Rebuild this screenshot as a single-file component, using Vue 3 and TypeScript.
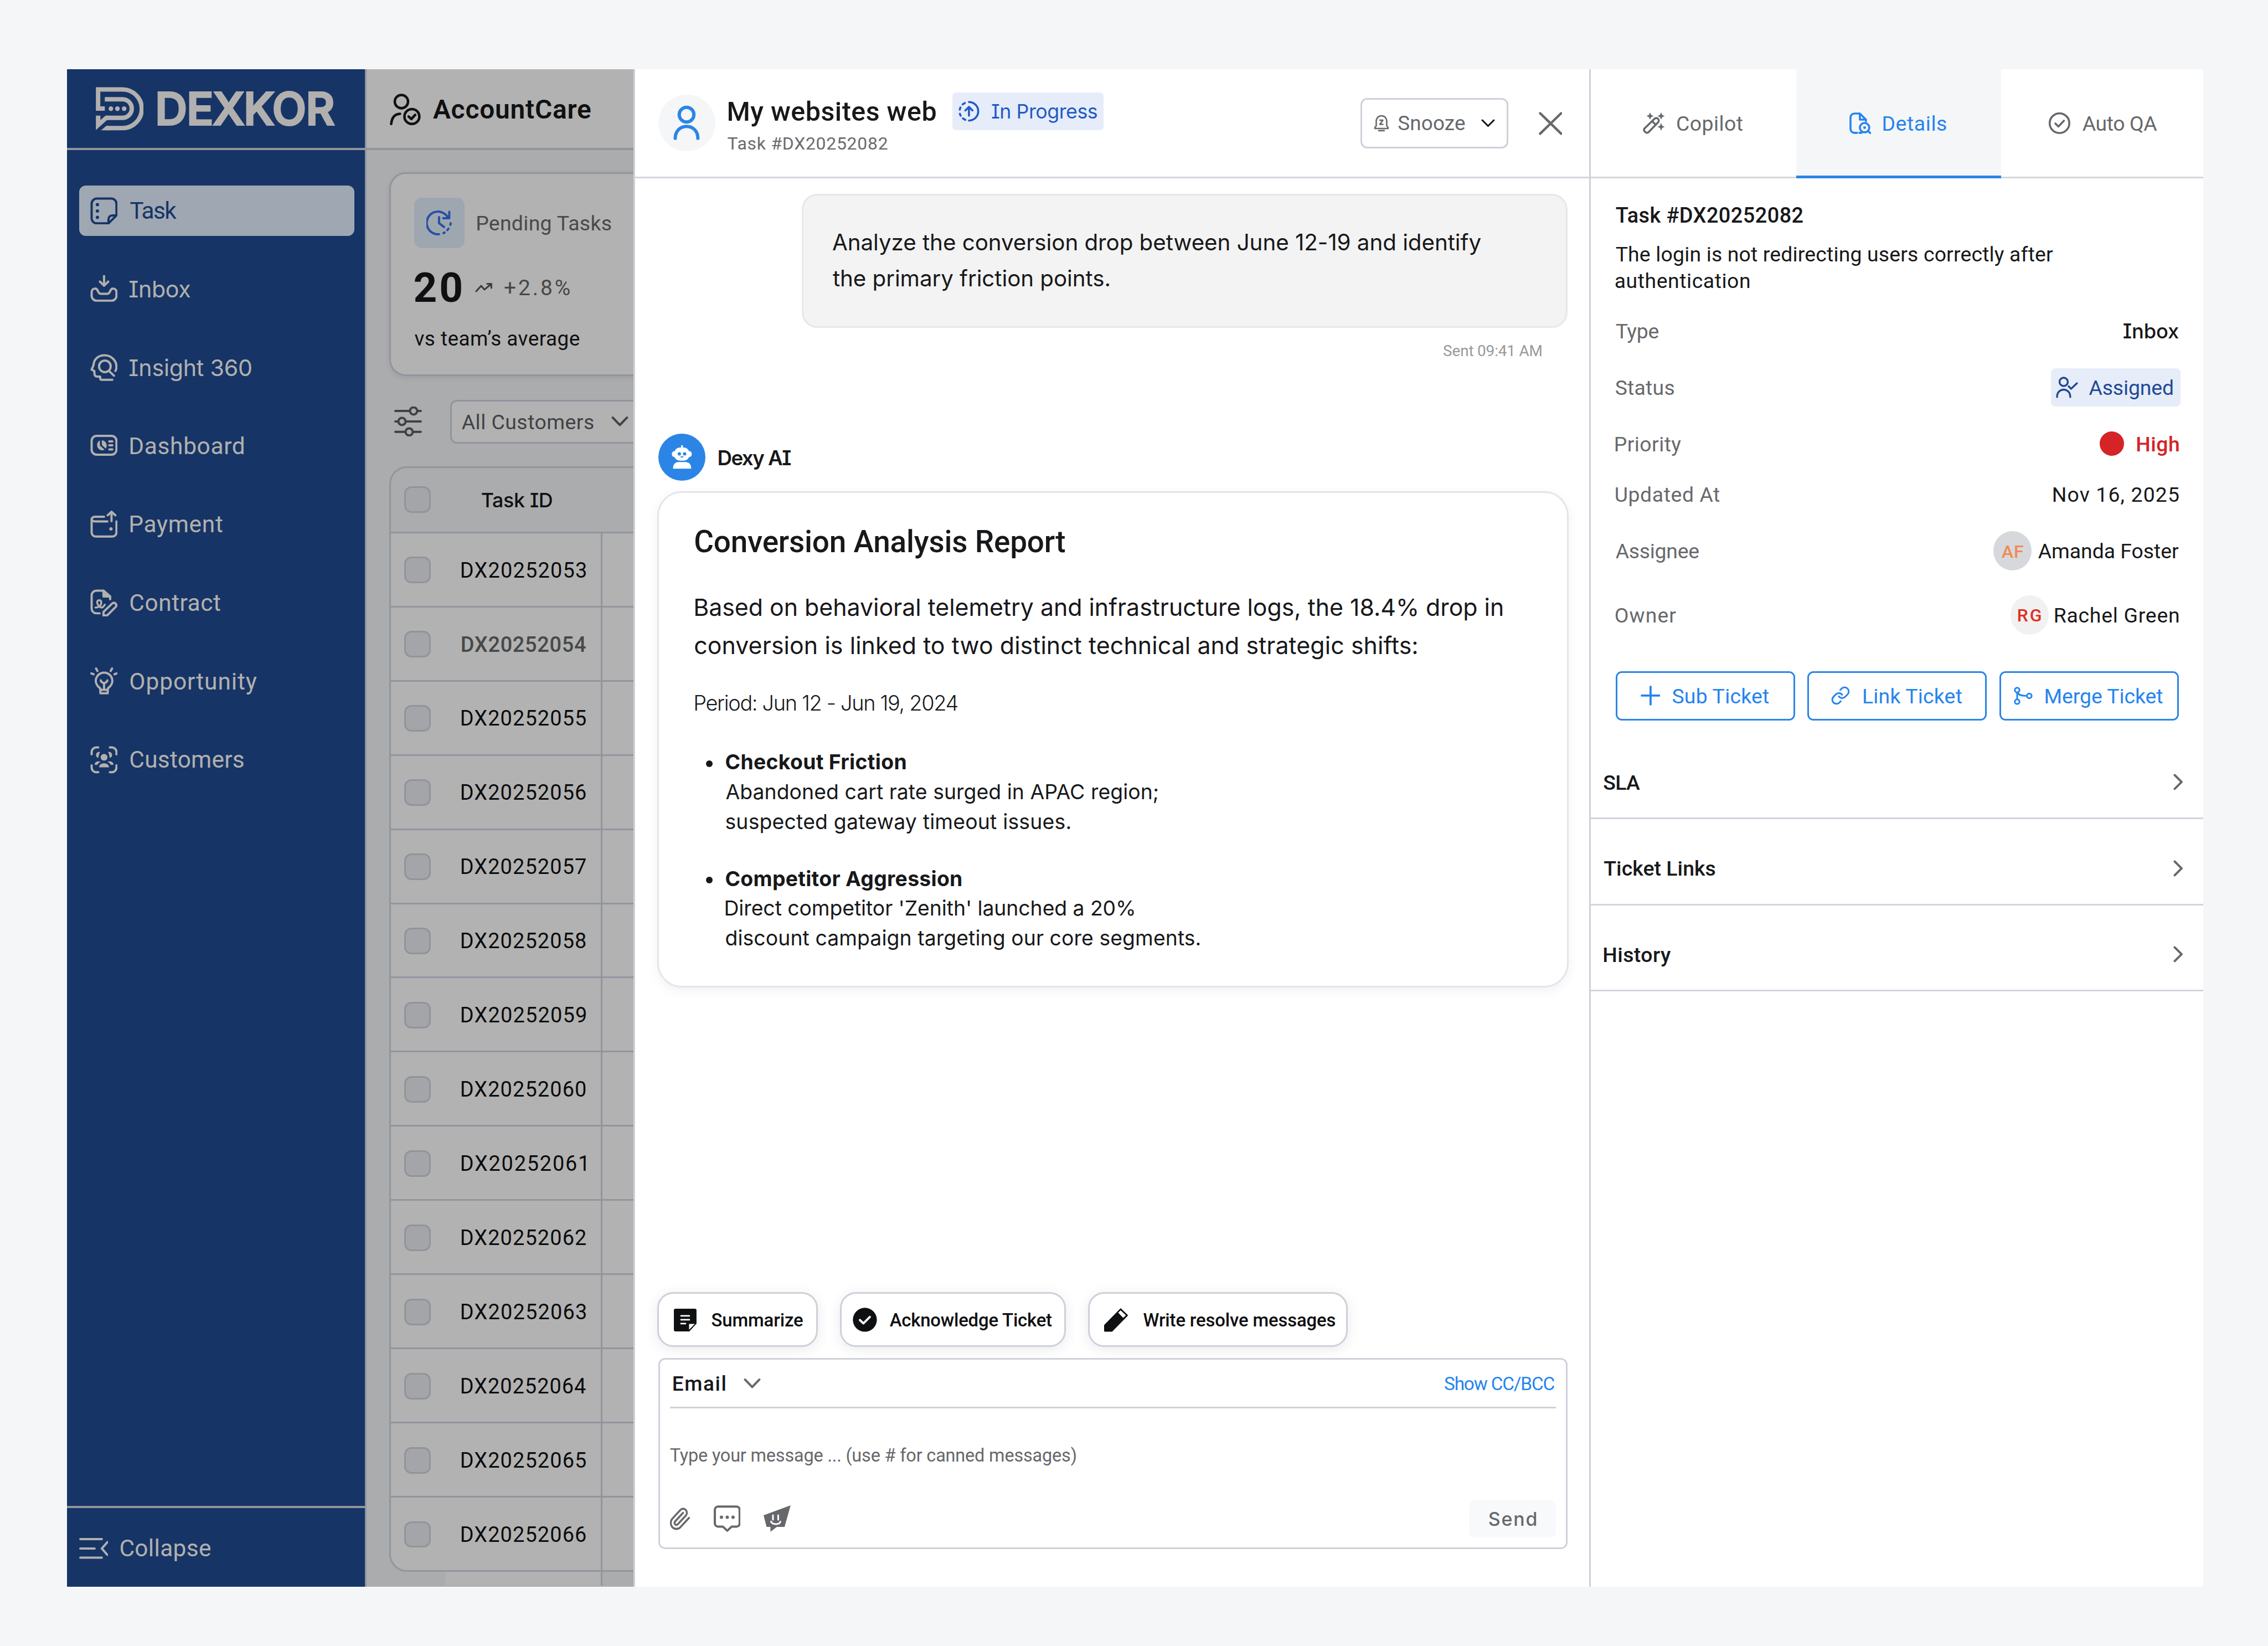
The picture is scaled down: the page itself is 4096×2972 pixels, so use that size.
<script setup lang="ts">
import { h, type Directive } from 'vue'

/* Icon set: [width, height, svg markup] */
const icons: Record<string, [number, number, string]> = {
  logo: [87, 79, '<g transform="translate(-13 -18) scale(.3333)" stroke-width="24" stroke-linecap="butt" stroke-linejoin="miter"><path d="M88 171.500H51.500V67.500H184A105 105 0 0 1 184 277.500H96"/><path d="M88 121H184A50.500 50.500 0 0 1 184 222H98"/><g fill="currentColor" stroke="none"><path d="M68 289.500L96 265.500H112V289.500Z"/><path d="M39.500 210H64V234L92 210H110V234H100L39.500 288Z"/><circle cx="121" cy="172" r="12.500"/><circle cx="156.500" cy="172" r="12.500"/><circle cx="193" cy="172" r="12.500"/></g></g>'],
  task: [50, 50, '<path d="M12 2.500H38A9.500 9.500 0 0 1 47.500 12V33L33 47.500H12A9.500 9.500 0 0 1 2.500 38V12A9.500 9.500 0 0 1 12 2.500ZM47 33H40A7 7 0 0 0 33 40V47"/><g fill="currentColor" stroke="none"><circle cx="13" cy="13.500" r="3"/><circle cx="13" cy="25" r="3"/><circle cx="13" cy="36.500" r="3"/></g>'],
  inbox: [50, 50, '<path d="M25 0V18M17.500 11.500L25 19L32.500 11.500M9 24C15 24 13 33.500 19 33.500H31C37 33.500 35 24 41 24C45 24 47.500 27 47.500 31V37A9 9 0 0 1 38.500 46H11.500A9 9 0 0 1 2.500 37V31C2.500 27 5 24 9 24Z"/>'],
  insight: [50, 50, '<path d="M45.500 31C47 28.500 47.500 26 47.500 23A21.500 21 0 0 0 26 2.500C14 2.500 6.500 10 6 20L2.500 28.500L7.500 31V35C7.500 39 9 41 13 41H18V44.500Q18 47 21 47H40"/><circle cx="26.500" cy="22.500" r="10.500"/><path d="M34 31L43 39.500"/>'],
  dashboard: [50, 50, '<rect x="2.500" y="7" width="45" height="34" rx="9"/><path d="M34.500 17H40M34.500 24H40M34.500 31.500H40"/><g fill="currentColor" stroke="none"><path d="M17.500 15A9.500 9.500 0 1 0 26 32L17.500 24.500Z"/><path d="M21 15A9.500 9.500 0 0 1 28 30L21 23.500Z"/></g>'],
  payment: [50, 50, '<path d="M25 11H8.500A6 4.500 0 0 0 2.500 15.500V39.500A7.500 7.500 0 0 0 10 47H40A7.500 7.500 0 0 0 47.500 39.500V19.500M2.500 15A6 4.500 0 0 0 8.500 19.500H31M38.500 19V3M31.500 8.500L38.500 2L45.500 8.500"/><circle cx="37.500" cy="33" r="3" fill="currentColor" stroke="none"/>'],
  contract: [50, 50, '<path d="M17 43.500H11A8.500 8.500 0 0 1 2.500 35V11A8.500 8.500 0 0 1 11 2.500H24L36 13V18"/><path d="M24 2.500V13H36Z" fill="currentColor"/><path d="M24 47.500V41L40 25.500A4.500 4.500 0 0 1 46.500 31.500L31 47Z"/><path stroke-width="3.500" d="M9.500 33C16 33 20 29 20 23.500C20 18.500 12.500 18.500 12.500 23.500C12.500 28 17 33 21 33C24 33 24 30 26.500 28"/>'],
  opportunity: [50, 50, '<path d="M18 38C13 34 10 30.500 10 24.500A15 15 0 0 1 40 24.500C40 30.500 37 34 32 38L31.500 47H18.500ZM18.500 40.500H31.500M25 38V28.500M19 23.500Q20 27.500 25 28.500Q30 27.500 31 23.500M2 11L6 12.500M10.500 2L13 6.500M39.500 2L37 6.500M48 11L44 12.500"/>'],
  customers: [50, 50, '<path d="M2.500 15V11A8.500 8.500 0 0 1 11 2.500H14.500M35.500 2.500H39A8.500 8.500 0 0 1 47.500 11V15M47.500 35V39A8.500 8.500 0 0 1 39 47.500H35.500M14.500 47.500H11A8.500 8.500 0 0 1 2.500 39V35"/><g fill="currentColor" stroke="none"><circle cx="25" cy="20.500" r="6.200"/><path d="M16 38.500C16 29 34 29 34 38.500ZM18 11A5.500 5.500 0 1 0 14 21.500C16 19 15 14 18 11ZM32 11A5.500 5.500 0 1 1 36 21.500C34 19 35 14 32 11ZM8 34C8 28 14 27 19 28.500Q14 31 13 34ZM42 34C42 28 36 27 31 28.500Q36 31 37 34Z"/></g>'],
  collapse: [53, 40, '<path d="M2 3H41M2 20H28M2 36.500H41M51 8.500L41 20L51 31.500"/>'],
  userCheck: [56, 58, '<circle cx="21" cy="14.500" r="12"/><path d="M2.500 55C3.500 43 9 37 18.500 36.500"/><circle cx="40" cy="41.500" r="13.500"/><path d="M34 41.500L39 46L46 38.500"/>'],
  clock: [47, 47, '<path d="M41.500 3.500V15H30.500M39 13.500A20.500 20.500 0 1 0 23 44M23 13V24L32 31"/><path d="M31 42L33 41M38 36.500L40 34M43.500 27L44 24"/>'],
  trend: [31, 18, '<path d="M2 16L11 6L17 13L29 3M22 2.500H29.500V10"/>'],
  sliders: [50, 54, '<path d="M2 8H27M43 8H48M2 27H6M22 27H48M2 46H19M35 46H48"/><circle cx="35" cy="8" r="6.500"/><circle cx="14" cy="27" r="6.500"/><circle cx="27" cy="46" r="6.500"/>'],
  down: [31, 20, '<path d="M2.500 3L15.500 16.500L28.500 3"/>'],
  downThin: [25, 15, '<path d="M2 2L12.500 12.500L23 2"/>'],
  person: [48, 64, '<circle cx="24" cy="17" r="13.300"/><path d="M3.500 60C3.500 31 44.500 31 44.500 60"/>'],
  progress: [38, 38, '<path d="M19 2.200A16.800 16.800 0 0 1 19 35.800M12.500 34.500L8 32M4 27L2.500 23.500M2.300 16L3.500 12M7.500 6.500L11.500 4M19 27V11.500M12.500 17.500L19 11L25.500 17.500"/>'],
  bell: [28, 31, '<path d="M2 23.500L4.500 20V12A9.500 10 0 0 1 23.500 12V20L26 23.500V25H2ZM9 29H19M11 10H16.500L11 17.500H16.500"/>'],
  close: [43, 42, '<path d="M2.500 2.500L40.500 39.500M40.500 2.500L2.500 39.500"/>'],
  robot: [85, 85, '<g fill="#fff" stroke="none"><rect x="29" y="25" width="27" height="24" rx="10"/><rect x="24.500" y="31.500" width="36" height="11" rx="5"/><rect x="41.200" y="21" width="3.200" height="6"/><path d="M26.500 63.500C26.500 55 31 51.500 37 51.500H49C55 51.500 59.500 55 59.500 63.500Z"/></g><g fill="#2b85e7" stroke="none"><circle cx="38" cy="36.500" r="3"/><circle cx="47.500" cy="36.500" r="3"/><rect x="40" y="41" width="5.500" height="2" rx="1"/></g>'],
  note: [41, 41, '<path stroke="none" fill="currentColor" d="M3 0H38A3 3 0 0 1 41 3V27L28 41H3A3 3 0 0 1 0 38V3A3 3 0 0 1 3 0Z"/><path stroke="#fff" stroke-width="2.800" d="M13 13H28M13 20H28M13 27H21"/><path stroke="none" fill="#fff" d="M27.500 38V27.500H38Z"/>'],
  checkFill: [44, 44, '<circle cx="22" cy="22" r="21.700" fill="currentColor" stroke="none"/><path stroke="#fff" d="M13 22.500L19.500 28.500L31 17"/>'],
  pencil: [44, 43, '<path stroke="none" fill="currentColor" d="M0 41V30.500L30 0L43.500 13L14.500 42.500H1.500A1.500 1.500 0 0 1 0 41Z"/><path stroke="none" fill="#fff" d="M25.500 8L30 4L39.500 13L34.500 17.500Z"/>'],
  clip: [37, 41, '<path transform="translate(-2 -1.500) scale(1.700 1.830)" stroke-width="2" d="M21.440 11.050l-9.190 9.190a6 6 0 0 1-8.490-8.490l8.570-8.570A4 4 0 1 1 18 8.840l-8.590 8.570a2 2 0 0 1-2.830-2.830l8.490-8.480"/>'],
  chat: [49, 49, '<path d="M8 2.200H41A6 6 0 0 1 47 8V33A6 6 0 0 1 41 38.500H32.500L24.500 46L16.500 38.500H8A6 6 0 0 1 2 33V8A6 6 0 0 1 8 2.200Z"/><g fill="currentColor" stroke="none"><circle cx="14" cy="21.500" r="3"/><circle cx="24.500" cy="21.500" r="3"/><circle cx="35" cy="21.500" r="3"/></g>'],
  smile: [49, 48, '<path stroke="none" fill="currentColor" d="M49 0L38 39H24L12.500 48V39H5.500L0 18Z"/><path stroke="#fff" stroke-width="3" d="M17 18V26M26.500 18V26M13.500 29.500C16 35.500 29 35.500 30.500 29.500"/>'],
  wand: [40, 39, '<path d="M3 29L21 11.500A4.500 4.500 0 0 1 27.500 18L10 36C6 39 0 33 3 29ZM17 16L23 22"/><g fill="currentColor" stroke="none"><path d="M13 0L15 4.500L19.500 6.500L15 8.500L13 13L11 8.500L6.500 6.500L11 4.500Z"/><path d="M33 0L35 4.500L39.500 6.500L35 8.500L33 13L31 8.500L26.500 6.500L31 4.500Z"/><path d="M33 19L35 24L39.500 26L35 28L33 33L31 28L26.500 26L31 24Z"/></g>'],
  fileSearch: [40, 39, '<path d="M14 37H9A7 7 0 0 1 2 30V9A7 7 0 0 1 9 2H19L30 13V16M19 2V13H30"/><circle cx="27.500" cy="27.500" r="8.500"/><circle cx="27.500" cy="27.500" r="2.500" fill="currentColor" stroke="none"/><path d="M34 34L38 37.500M18 37H22"/>'],
  circleCheck: [39, 39, '<circle cx="19.500" cy="19.500" r="17.800"/><path d="M12 20L17.500 25.500L27.500 15"/>'],
  assigned: [40, 39, '<circle cx="14" cy="9.500" r="7.500"/><path d="M2 37C2 19 26 19 26 37M23 17.500L27.500 22L38 12"/>'],
  plus: [36, 36, '<path stroke-width="3.800" d="M18 2V34M2 18H34"/>'],
  link: [36, 36, '<path transform="scale(1.500)" stroke-width="2" d="M10 13a5 5 0 0 0 7.540.540l3-3a5 5 0 0 0-7.070-7.070l-1.720 1.710M14 11a5 5 0 0 0-7.540-.540l-3 3a5 5 0 0 0 7.070 7.070l1.710-1.710"/>'],
  merge: [34, 33, '<circle cx="6" cy="6" r="4.200"/><circle cx="6" cy="27" r="4.200"/><circle cx="28" cy="16.500" r="4.200"/><path d="M6 10.500V22.500M7 11C9 15.500 14 16.500 23.500 16.500"/>'],
  right: [18, 30, '<path d="M2.500 2.500L15 15L2.500 27.500"/>'],
}

const Icon = (p: { name: string; sw?: number }) => {
  const [w, ht, markup] = icons[p.name]
  return h('svg', {
    width: w, height: ht, viewBox: `0 0 ${w} ${ht}`, fill: 'none', stroke: 'currentColor',
    'stroke-width': p.sw ?? 4, 'stroke-linecap': 'round', 'stroke-linejoin': 'round', innerHTML: markup,
    class: 'icon',
  })
}

/* Tracks a single line of text so that its visible ink spans the given width. */
const ctx = document.createElement('canvas').getContext('2d')!
const vFit: Directive<HTMLElement, number> = {
  mounted(el, { value }) {
    const cs = getComputedStyle(el)
    const text = (el.textContent ?? '').trim()
    ctx.font = `${cs.fontWeight} ${cs.fontSize} ${cs.fontFamily}`
    const m = ctx.measureText(text)
    const ink = m.actualBoundingBoxRight + m.actualBoundingBoxLeft
    const ls = (value - ink) / (text.length - 1)
    el.style.letterSpacing = `${ls}px`
    el.style.marginLeft = `${m.actualBoundingBoxLeft}px`
    el.style.marginRight = `${m.actualBoundingBoxRight - m.width - ls}px`
  },
}

const nav = [
  { icon: 'task', label: 'Task', w: 84 },
  { icon: 'inbox', label: 'Inbox', w: 102, serifI: true },
  { icon: 'insight', label: 'Insight 360', w: 212, serifI: true },
  { icon: 'dashboard', label: 'Dashboard', w: 205 },
  { icon: 'payment', label: 'Payment', w: 167 },
  { icon: 'contract', label: 'Contract', w: 163 },
  { icon: 'opportunity', label: 'Opportunity', w: 229 },
  { icon: 'customers', label: 'Customers', w: 205 },
]
const rows = Array.from({ length: 14 }, (_, i) => `DX202520${53 + i}`)
const findings = [
  { title: 'Checkout Friction', tw: 326, lines: [['Abandoned cart rate surged in APAC region;', 783], ['suspected gateway timeout issues.', 624]] },
  { title: 'Competitor Aggression', tw: 427, lines: [["Direct competitor 'Zenith' launched a 20%", 740], ['discount campaign targeting our core segments.', 859]] },
] as { title: string; tw: number; lines: [string, number][] }[]
const quick = [
  { cls: 'q1', icon: 'note', label: 'Summarize', w: 165 },
  { cls: 'q2', icon: 'checkFill', label: 'Acknowledge Ticket', w: 295 },
  { cls: 'q3', icon: 'pencil', label: 'Write resolve messages', w: 348 },
]
const tabs = [
  { icon: 'wand', label: 'Copilot', w: 118, on: false },
  { icon: 'fileSearch', label: 'Details', w: 114, on: true },
  { icon: 'circleCheck', label: 'Auto QA', w: 135, on: false },
]
const actions = [
  { cls: 'a1', icon: 'plus', label: 'Sub Ticket', w: 175 },
  { cls: 'a2', icon: 'link', label: 'Link Ticket', w: 178 },
  { cls: 'a3', icon: 'merge', label: 'Merge Ticket', w: 212 },
]
const sections = [
  { label: 'SLA', w: 66 },
  { label: 'Ticket Links', w: 202 },
  { label: 'History', w: 122 },
]
</script>

<template>
  <div class="stage">
    <div class="window">
      <aside class="sidebar">
        <div class="brand">
          <Icon name="logo" />
          <span class="wordmark" v-fit="317">DEXKOR</span>
        </div>
        <nav>
          <a v-for="n in nav" :key="n.label" :class="{ active: n.icon === 'task' }">
            <Icon :name="n.icon" />
            <span :class="{ si: n.serifI }" v-fit="n.w">{{ n.label }}</span>
          </a>
        </nav>
        <div class="collapse">
          <Icon name="collapse" />
          <span v-fit="163">Collapse</span>
        </div>
      </aside>

      <main>
        <header class="app-head">
          <Icon name="userCheck" :sw="4.5" />
          <h1 v-fit="286">AccountCare</h1>
        </header>
        <div class="app-body">
          <section class="stat">
            <div class="stat-top">
              <div class="tile"><Icon name="clock" /></div>
              <span v-fit="243">Pending Tasks</span>
            </div>
            <div class="stat-mid">
              <strong v-fit="85">20</strong>
              <Icon name="trend" :sw="3" />
              <span v-fit="118">+2.8%</span>
            </div>
            <div class="stat-low"><span v-fit="299">vs team’s average</span></div>
          </section>
          <div class="filters">
            <Icon name="sliders" />
            <div class="select">
              <span v-fit="239">All Customers</span>
              <Icon name="down" />
            </div>
          </div>
          <section class="table">
            <div class="thead"><i class="box"></i><b class="si" v-fit="121">Task ID</b></div>
            <div v-for="(r, i) in rows" :key="r" class="tr">
              <div class="cell" :class="{ seen: i === 1 }"><i class="box"></i><span v-fit="225">{{ r }}</span></div>
            </div>
          </section>
          <div class="peek"></div>
        </div>
      </main>

      <div class="scrim"></div>

      <div class="drawer">
        <section class="chat">
          <header class="chat-head">
            <div class="avatar"><Icon name="person" :sw="6" /></div>
            <div class="who">
              <div class="who-top">
                <h2 v-fit="376">My websites web</h2>
                <span class="badge"><Icon name="progress" :sw="3.6" /><span class="si" v-fit="183">In Progress</span></span>
              </div>
              <div class="who-sub"><span v-fit="290">Task #DX20252082</span></div>
            </div>
            <button class="snooze">
              <Icon name="bell" :sw="2.6" /><span v-fit="121">Snooze</span><Icon name="downThin" :sw="3" />
            </button>
            <Icon name="close" :sw="4.4" class="close" />
          </header>

          <div class="bubble">
            <p v-fit="1174">Analyze the conversion drop between June 12-19 and identify</p>
            <p v-fit="501">the primary friction points.</p>
          </div>
          <div class="sent"><span v-fit="178">Sent 09:41 AM</span></div>

          <div class="bot">
            <div class="bot-av"><Icon name="robot" /></div>
            <b class="si" v-fit="123">Dexy AI</b>
          </div>

          <article class="report">
            <h3 v-fit="670">Conversion Analysis Report</h3>
            <div class="lead">
              <p v-fit="1463">Based on behavioral telemetry and infrastructure logs, the 18.4% drop in</p>
              <p v-fit="1308">conversion is linked to two distinct technical and strategic shifts:</p>
            </div>
            <p class="period" v-fit="476">Period: Jun 12 - Jun 19, 2024</p>
            <ul>
              <li v-for="f in findings" :key="f.title">
                <i></i>
                <div>
                  <p class="ft" v-fit="f.tw">{{ f.title }}</p>
                  <p v-for="l in f.lines" :key="l[0]" v-fit="l[1]">{{ l[0] }}</p>
                </div>
              </li>
            </ul>
          </article>

          <div class="quick">
            <button v-for="q in quick" :key="q.label" :class="q.cls"><Icon :name="q.icon" /><span v-fit="q.w">{{ q.label }}</span></button>
          </div>

          <div class="composer">
            <div class="comp-head">
              <b v-fit="94">Email</b>
              <Icon name="down" />
              <span class="cc" v-fit="199">Show CC/BCC</span>
            </div>
            <div class="ph"><span v-fit="735">Type your message ... (use # for canned messages)</span></div>
            <div class="comp-foot">
              <Icon name="clip" /><Icon name="chat" /><Icon name="smile" />
              <button class="send"><span v-fit="86">Send</span></button>
            </div>
          </div>
        </section>

        <aside class="details">
          <div class="tabs">
            <div v-for="t in tabs" :key="t.label" class="tab" :class="{ on: t.on }"><Icon :name="t.icon" :sw="3.6" /><span v-fit="t.w">{{ t.label }}</span></div>
          </div>
          <div class="info">
            <h4 v-fit="340">Task #DX20252082</h4>
            <div class="desc">
              <p v-fit="793">The login is not redirecting users correctly after</p>
              <p v-fit="243">authentication</p>
            </div>
            <dl>
              <div><dt v-fit="78">Type</dt><dd><b class="si" v-fit="93">Inbox</b></dd></div>
              <div><dt v-fit="106">Status</dt><dd class="assigned"><Icon name="assigned" :sw="3.4" /><span v-fit="152">Assigned</span></dd></div>
              <div><dt v-fit="119">Priority</dt><dd class="high"><i></i><b v-fit="76">High</b></dd></div>
              <div><dt v-fit="188">Updated At</dt><dd><span v-fit="227">Nov 16, 2025</span></dd></div>
              <div><dt v-fit="151">Assignee</dt><dd><i class="av af"><span v-fit="39">AF</span></i><span v-fit="255">Amanda Foster</span></dd></div>
              <div><dt v-fit="110">Owner</dt><dd><i class="av rg"><span v-fit="41">RG</span></i><span v-fit="224">Rachel Green</span></dd></div>
            </dl>
            <div class="actions">
              <button v-for="a in actions" :key="a.label" :class="a.cls"><Icon :name="a.icon" :sw="3" /><span v-fit="a.w">{{ a.label }}</span></button>
            </div>
          </div>
          <div class="sections">
            <div v-for="s in sections" :key="s.label"><b v-fit="s.w">{{ s.label }}</b><Icon name="right" /></div>
          </div>
        </aside>
      </div>
    </div>
  </div>
</template>

<style>
html, body { margin: 0; background: #f5f6f8; overflow: hidden; }
</style>

<style scoped>
/* Hairlines are 3.02px so that they still resolve to 3 device pixels under the zoom. */
.stage {
  --hair: 3.020px;
  zoom: 0.99732;
  width: 4107px; height: 2980px; box-sizing: border-box;
  padding: 125px 117px 107px 121px;
  background: #f5f6f8; color: #17181a; overflow: hidden;
  font-family: Roboto, "Noto Sans", sans-serif; font-size: 37.500px; line-height: 1.2;
}
.stage * { box-sizing: border-box; }
h1, h2, h3, h4, p, ul, dl, dd { margin: 0; padding: 0; }
button { padding: 0; background: #fff; font: inherit; color: inherit; display: flex; align-items: center; }
b { font-weight: 500; }
.icon { flex: none; display: block; }
span, b, strong, h1, h2, h3, h4, p, dt { white-space: nowrap; }
span, b, strong, h1, h2, dt { padding-top: 2px; }
.si { font-family: Inter, sans-serif; font-feature-settings: "cv08"; font-size: .97em; }
.window { position: relative; width: 3869px; height: 2748px; overflow: hidden; display: flex; background: #f5f6f8; }

.sidebar { width: 540px; flex: none; background: #204b92; color: #fffdfa; display: flex; flex-direction: column; font-size: 42.500px; }
.brand { height: 147px; flex: none; border-bottom: 4.020px solid #d3d5dc; display: flex; align-items: center; padding: 1px 0 0 52px; gap: 27px; }
.wordmark { font-family: Inter, sans-serif; font-weight: 500; font-size: 80px; -webkit-text-stroke: 4px currentColor; stroke-linejoin: round; line-height: 100px; padding-bottom: 2px; }
nav { padding: 64px 19px 0 22px; display: flex; flex-direction: column; gap: 51px; }
nav a { height: 91px; display: flex; align-items: center; gap: 23px; padding-left: 20px; border-radius: 12px; }
nav a.active { background: #e4f1ff; color: #204b92; }
.collapse { margin-top: auto; height: 147px; border-top: 4.020px solid #d3d5dc; display: flex; align-items: center; padding: 3px 0 0 22px; gap: 22px; }

main { flex: 1; min-width: 0; border-left: var(--hair) solid #d2d6e2; }
.app-head { height: 147px; background: #fff; border-bottom: 4.020px solid #d2d6e2; display: flex; align-items: center; padding: 3px 0 0 42px; gap: 22px; }
h1 { font-size: 48px; font-weight: 600; }
.app-body { padding: 40px 0 0 41px; display: flex; flex-direction: column; }
.stat { height: 369px; border: var(--hair) solid #d2d6e2; border-radius: 30px; background: #fff; padding: 42.500px; box-shadow: 0 4px 10px rgba(30,40,60,.08); flex: none; }
.stat-top { height: 92px; display: flex; align-items: center; gap: 23px; color: #676a6c; }
.tile { width: 91px; height: 92px; border-radius: 14px; background: #e2eefc; color: #3a72ee; display: grid; place-items: center; }
.stat-mid { height: 142px; display: flex; align-items: center; }
.stat-mid strong { font-size: 75px; font-weight: 700; }
.stat-mid .icon { margin: 0 22px 0 25px; color: #555; }
.stat-mid span { font-size: 39px; color: #666; }
.stat-low { height: 42px; display: flex; align-items: center; font-size: 37px; }
.filters { margin-top: 43px; height: 79px; display: flex; align-items: center; padding-left: 9px; color: #5c5e60; }
.select { margin-left: 51px; width: 600px; height: 79px; border: var(--hair) solid #d2d6e2; border-radius: 12px; background: #fff; display: flex; align-items: center; padding-left: 18px; gap: 32px; color: #5c5f62; }
.table { margin-top: 41px; border: var(--hair) solid #d2d6e2; border-radius: 32px; overflow: hidden; flex: none; }
.thead { height: 115.500px; display: flex; align-items: center; padding-left: 24px; font-size: 37px; }
.thead .box { margin-right: 92px; }
.tr { height: 134.300px; border-top: var(--hair) solid #d2d6e2; background: #fff; display: flex; }
.cell { width: 383px; border-right: var(--hair) solid #d2d6e2; display: flex; align-items: center; padding-left: 24px; padding-top: 2px; font-size: 38px; color: #111; }
.cell .box { margin-right: 56px; }
.cell.seen { color: #66696b; font-weight: 500; }
.box { width: 48px; height: 48px; flex: none; border: var(--hair) solid #d0d5dd; border-radius: 13px; background: #eaedf3; }
.peek { width: 285px; height: 25px; margin-left: 101px; background: #fff; border-right: var(--hair) solid #d2d6e2; flex: none; }

.scrim { position: absolute; inset: 0; background: rgba(0,0,0,.3); }
.drawer { position: absolute; top: 0; right: 0; bottom: 0; left: 1026px; background: #fff; border-left: var(--hair) solid #cfd0d9; display: flex; }

.chat { width: 1728px; flex: none; display: flex; flex-direction: column; padding-bottom: 68px; }
.chat-head { height: 197.500px; flex: none; border-bottom: var(--hair) solid #d2d5dc; padding: 42px 49px 0 42px; display: flex; align-items: flex-start; }
.avatar { width: 103px; height: 103px; margin: 4px 24px 0 0; border-radius: 50%; background: #f5f6f8; color: #2b85e7; display: grid; place-items: center; }
.who-top { height: 69px; display: flex; align-items: center; }
h2 { font-size: 48.500px; font-weight: 500; }
.badge { height: 69px; margin-left: 30px; padding: 0 11px; gap: 24px; border-radius: 7px; background: #e6ecfa; color: #1f5bc4; display: flex; align-items: center; font-size: 37px; }
.who-sub { height: 48px; margin-top: -1px; margin-left: -2px; display: flex; align-items: center; font-size: 32px; color: #6a6b6e; }
.snooze { margin: 10px 55px 0 auto; width: 267px; height: 92px; border: var(--hair) solid #cfd0d9; border-radius: 12px; padding-left: 21px; color: #66686b; font-size: 37px; }
.snooze span { padding-left: 16px; }
.snooze .icon:last-child { margin-left: 29px; color: #111; }
.close { margin-top: 36px; color: #66686b; }

.bubble { margin: 28px 39px 0 auto; width: 1387px; height: 243px; flex: none; border: var(--hair) solid #e7e7e7; border-radius: 28px; background: #f3f3f3; padding: 54px 0 0 53px; font-family: Inter, sans-serif; font-size: 40.500px; line-height: 64.400px; }
.sent { height: 40px; margin: 21px 86px 0 auto; display: flex; align-items: center; font-size: 28px; color: #97999b; }
.bot { margin: 131px 0 0 42px; display: flex; align-items: center; gap: 24px; height: 85px; font-size: 38px; }
.bot b { font-weight: 600; }
.bot-av { width: 85px; height: 85px; border-radius: 50%; background: #2b85e7; }
.report { margin: 19px 37px 0 40px; height: 898px; flex: none; border: var(--hair) solid #e2e5eb; border-radius: 44px; box-shadow: 0 6px 18px rgba(40,50,80,.07); padding: 49px 0 0 65.500px; font-family: Inter, sans-serif; }
h3 { font-family: Roboto, sans-serif; font-size: 55px; font-weight: 500; line-height: 80px; }
.lead { margin-top: 43px; font-size: 43px; line-height: 70px; }
.period { margin-top: 42px; font-size: 38px; line-height: 54px; font-weight: 300; }
ul { list-style: none; padding: 0 0 0 20px; margin-top: 52.500px; font-size: 37.500px; line-height: 53.800px; display: flex; flex-direction: column; gap: 49.400px; }
li { display: flex; }
li i { width: 12px; height: 12px; border-radius: 50%; background: #17181a; margin: 24px 23.500px 0 0; }
.ft { font-weight: 700; }

.quick { margin: auto 0 0 40px; display: flex; gap: 40px; font-size: 33px; color: #0f1011; font-weight: 500; }
.quick button { height: 100px; border: var(--hair) solid #cfd0d9; border-radius: 29px; box-shadow: 0 4px 22px rgba(40,50,80,.10); padding-top: 1px; }
.quick .q1 { width: 291px; padding-left: 27px; gap: 28px; }
.quick .q2 { width: 409px; padding-left: 20px; gap: 23px; }
.quick .q3 { width: 471px; padding-left: 26px; gap: 27px; }
.composer { margin: 20px 39px 0 42px; height: 346px; flex: none; border: var(--hair) solid #d0d2da; border-radius: 12px; padding: 0 18px; background: #fff; }
.comp-head { height: 88px; border-bottom: var(--hair) solid #cfd1da; display: flex; align-items: center; padding: 0 3px 0 6px; font-size: 37px; }
.comp-head .icon { margin: 0 auto 0 34px; color: #66686b; }
.cc { font-size: 33.500px; color: #2484ee; }
.ph { height: 50px; margin-top: 60px; display: flex; align-items: center; font-size: 32.500px; color: #66686b; }
.comp-foot { margin-top: 56px; height: 67px; display: flex; align-items: center; color: #66686b; gap: 42px; }
.send { margin-left: auto; width: 158px; height: 67px; border: 0; border-radius: 10px; background: #f8f9fb; justify-content: center; font-family: Inter, sans-serif; font-size: 34px; font-weight: 500; }

.details { flex: 1; border-left: var(--hair) solid #cfd0d9; font-size: 37.500px; }
.tabs { height: 197.500px; display: flex; }
.tab { flex: 1; border-bottom: var(--hair) solid #d4d6db; padding: 2px 3px 0 0; display: flex; align-items: center; justify-content: center; gap: 22px; color: #66686b; }
.tab.on { background: #f5f6f8; color: #2484ee; border-bottom: 5.020px solid #2b85e7; padding-top: 4px; }
.info { padding: 43px 49.500px 0 44.500px; }
h4 { font-size: 38px; font-weight: 500; line-height: 50px; }
.desc { margin-top: 21px; line-height: 48.200px; }
dl { margin-top: 15.500px; display: grid; grid-template-rows: 102px 102px 102px 80px 126px 106px; }
dl > div { display: flex; align-items: center; justify-content: space-between; }
dt { color: #68696c; }
dd { display: flex; align-items: center; }
.assigned { height: 70px; padding: 0 14px 0 9px; gap: 20px; border-radius: 8px; background: #e7ecf9; color: #1f4a94; margin-right: -3px; }
.high { color: #d42427; }
.high i { width: 44px; height: 44px; border-radius: 50%; background: #d42427; margin-right: 23px; }
.av { width: 69px; height: 71px; border-radius: 50%; margin-right: 12px; display: grid; place-items: center; font-style: normal; font-size: 32px; font-weight: 500; }
.af { background: #d6d8dc; color: #f08a55; }
.rg { background: #f1f1f2; color: #e0301e; }
.actions { margin-top: 48.500px; display: flex; justify-content: space-between; width: 1020px; }
.actions button { flex: none; width: 325px; height: 90px; border: var(--hair) solid #2b85e7; border-radius: 11px; color: #2484ee; }
.actions .a1 { padding-left: 42px; gap: 22px; }
.actions .a2 { padding-left: 39px; gap: 24px; }
.actions .a3 { padding-left: 23px; gap: 24px; }
.sections { margin-top: 22.500px; }
.sections > div { height: 155.800px; padding: 25px 41px 0 23px; border-bottom: var(--hair) solid #d2d4dd; display: flex; align-items: center; justify-content: space-between; }
.sections .icon { color: #66686b; }
</style>
